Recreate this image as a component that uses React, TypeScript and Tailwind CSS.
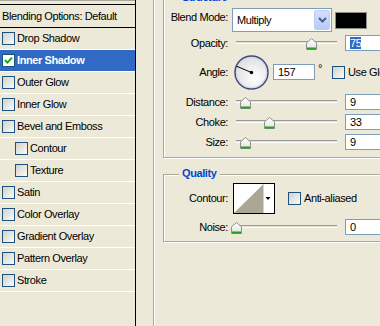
import React from 'react';

type Item = { label: string; selected?: boolean; indent?: boolean };

const items: Item[] = [
  { label: 'Drop Shadow' },
  { label: 'Inner Shadow', selected: true },
  { label: 'Outer Glow' },
  { label: 'Inner Glow' },
  { label: 'Bevel and Emboss' },
  { label: 'Contour', indent: true },
  { label: 'Texture', indent: true },
  { label: 'Satin' },
  { label: 'Color Overlay' },
  { label: 'Gradient Overlay' },
  { label: 'Pattern Overlay' },
  { label: 'Stroke' },
];

function CheckBox({ checked = false }: { checked?: boolean }) {
  return (
    <span
      className={`flex h-[13px] w-[13px] shrink-0 items-center justify-center border border-[#1c5180] ${
        checked ? 'bg-white' : 'bg-linear-to-br from-[#d3d2c8] to-[#fbfbf8]'
      }`}
    >
      {checked && (
        <svg width="9" height="9" viewBox="0 0 9 9">
          <path d="M1 4 L3.4 6.6 L8 1.6" fill="none" stroke="#21a121" strokeWidth="2" />
        </svg>
      )}
    </span>
  );
}

function Thumb() {
  return (
    <svg width="11" height="12" viewBox="0 0 11 12">
      <defs>
        <linearGradient id="thumbg" x1="0" y1="0" x2="0" y2="1">
          <stop offset="0" stopColor="#ffffff" />
          <stop offset="1" stopColor="#e3e3dc" />
        </linearGradient>
      </defs>
      <path d="M0.5 4.8 L5.5 0.5 L10.5 4.8 L10.5 11.5 L0.5 11.5 Z" fill="url(#thumbg)" stroke="#8e8f8f" />
      <rect x="1" y="9.5" width="9" height="2" fill="#21a121" />
    </svg>
  );
}

function Slider({ value }: { value: number }) {
  return (
    <div className="relative ml-[8px] h-[16px] w-[101px] shrink-0">
      <div className="absolute left-0 right-0 top-[6px] h-[3px] border-t border-b border-t-[#9d9b90] border-b-white bg-[#e2e0d4]" />
      <div className="absolute top-[3px] flex" style={{ left: value - 5 }}>
        <Thumb />
      </div>
    </div>
  );
}

function NumBox({ children }: { children: React.ReactNode }) {
  return (
    <div className="ml-[8px] flex h-[16px] w-[50px] shrink-0 items-center border border-[#7f9db9] bg-white pl-[4px]">
      {children}
    </div>
  );
}

function Label({ children }: { children: React.ReactNode }) {
  return <div className="w-[64px] shrink-0 text-right whitespace-nowrap">{children}</div>;
}

export default function App() {
  return (
    <div className="flex h-[326px] w-[380px] overflow-hidden bg-[#ece9d8] font-['Liberation_Sans',Arial,sans-serif] text-[11px] leading-[13px] tracking-[-0.4px] text-black">
      {/* Left style list */}
      <div className="flex w-[136px] shrink-0 flex-col border-r border-black">
        <div className="h-px shrink-0 bg-[#aca899]" />
        <div className="h-[3px] shrink-0" />
        <div className="h-px shrink-0 bg-black" />
        <div className="flex h-[23px] shrink-0 items-center border-b border-black pl-[2px] whitespace-nowrap">
          Blending Options: Default
        </div>
        {items.map((it) => (
          <div
            key={it.label}
            className={`flex h-[22px] shrink-0 items-center gap-[2px] border-b border-white whitespace-nowrap ${
              it.indent ? 'pl-[15px]' : 'pl-[2px]'
            } ${it.selected ? 'bg-[#316ac5] font-bold text-white' : ''}`}
          >
            <CheckBox checked={it.selected} />
            <span>{it.label}</span>
          </div>
        ))}
      </div>

      <div className="w-[17px] shrink-0" />

      {/* Right options panel */}
      <div className="flex w-[227px] shrink-0 flex-col border-l border-[#aca899] pl-[9px] shadow-[inset_1px_0_0_#fff]">
        {/* Structure group */}
        <div className="relative mt-[-2px] w-[240px] shrink-0 border border-[#aca899] pb-[7px] shadow-[inset_1px_1px_0_#fff,1px_1px_0_#fff]">
          <div className="absolute left-[15px] top-[-8px] bg-[#ece9d8] px-[3px] font-bold text-[#0046d5]">Structure</div>

          {/* Blend mode */}
          <div className="mt-[9px] flex h-[24px]">
            <div className="mt-[3px] w-[64px] shrink-0 text-right whitespace-nowrap">Blend Mode:</div>
            <div className="ml-[4px] flex h-[24px] w-[100px] shrink-0 border border-[#7f9db9] bg-white">
              <div className="flex-1 pl-[4px] pt-[5px]">Multiply</div>
              <div className="m-px flex w-[16px] items-center justify-center rounded-[2px] border border-[#bccdf5] bg-linear-to-b from-[#d4e0fd] to-[#b6cbf9]">
                <svg width="9" height="6" viewBox="0 0 9 6">
                  <path d="M1 1 L4.5 4.5 L8 1" fill="none" stroke="#4d6185" strokeWidth="2" />
                </svg>
              </div>
            </div>
            <div className="ml-[3px] mt-[4px] h-[17px] w-[32px] shrink-0 border border-[#8d8d86] bg-black" />
          </div>

          {/* Opacity */}
          <div className="mt-[3px] flex h-[16px] items-center">
            <Label>Opacity:</Label>
            <Slider value={75} />
            <NumBox>
              <span className="bg-[#316ac5] leading-[12px] text-white">75</span>
            </NumBox>
          </div>

          {/* Angle */}
          <div className="mt-[4px] flex h-[34px] items-center">
            <Label>Angle:</Label>
            <svg className="ml-[6px] shrink-0" width="35" height="35" viewBox="0 0 35 35">
              <defs>
                <radialGradient id="dialg" cx="0.6" cy="0.65" r="0.7">
                  <stop offset="0" stopColor="#ffffff" />
                  <stop offset="1" stopColor="#dcdcdc" />
                </radialGradient>
              </defs>
              <circle cx="17.5" cy="17.5" r="16.5" fill="url(#dialg)" stroke="#3b4c7d" strokeWidth="1.5" />
              <circle cx="17.5" cy="17.5" r="15.2" fill="none" stroke="#c9cfe0" strokeWidth="0.8" />
              <line x1="17.5" y1="17.5" x2="2.6" y2="11.2" stroke="#000" strokeWidth="1" />
              <circle cx="17.5" cy="17.5" r="1.7" fill="#000" />
            </svg>
            <div className="ml-[4px] flex h-[16px] w-[42px] shrink-0 items-center border border-[#7f9db9] bg-white pl-[4px]">
              157
            </div>
            <div className="mb-[8px] w-[17px] shrink-0 pl-[3px]">°</div>
            <CheckBox />
            <span className="ml-[3px] whitespace-nowrap">Use Global Light</span>
          </div>

          {/* Distance */}
          <div className="mt-[5px] flex h-[16px] items-center">
            <Label>Distance:</Label>
            <Slider value={9} />
            <NumBox>9</NumBox>
          </div>

          {/* Choke */}
          <div className="mt-[4px] flex h-[16px] items-center">
            <Label>Choke:</Label>
            <Slider value={33} />
            <NumBox>33</NumBox>
          </div>

          {/* Size */}
          <div className="mt-[4px] flex h-[16px] items-center">
            <Label>Size:</Label>
            <Slider value={9} />
            <NumBox>9</NumBox>
          </div>
        </div>

        {/* Quality group */}
        <div className="relative mt-[16px] w-[240px] shrink-0 border border-[#aca899] pb-[6px] shadow-[inset_1px_1px_0_#fff,1px_1px_0_#fff]">
          <div className="absolute left-[15px] top-[-8px] bg-[#ece9d8] px-[3px] font-bold text-[#0046d5]">Quality</div>

          {/* Contour */}
          <div className="mt-[8px] flex h-[31px] items-center">
            <Label>Contour:</Label>
            <svg className="ml-[5px] shrink-0" width="42" height="31" viewBox="0 0 42 31">
              <rect x="0.5" y="0.5" width="41" height="30" fill="#fff" stroke="#000" />
              <polygon points="1,30 30.5,1 30.5,30" fill="#aba796" />
              <polygon points="32.5,14 37.5,14 35,17" fill="#000" />
            </svg>
            <div className="ml-[13px] flex items-center">
              <CheckBox />
              <span className="ml-[3px] whitespace-nowrap">Anti-aliased</span>
            </div>
          </div>

          {/* Noise */}
          <div className="mt-[5px] flex h-[16px] items-center">
            <Label>Noise:</Label>
            <Slider value={0} />
            <NumBox>0</NumBox>
          </div>
        </div>
      </div>
    </div>
  );
}
